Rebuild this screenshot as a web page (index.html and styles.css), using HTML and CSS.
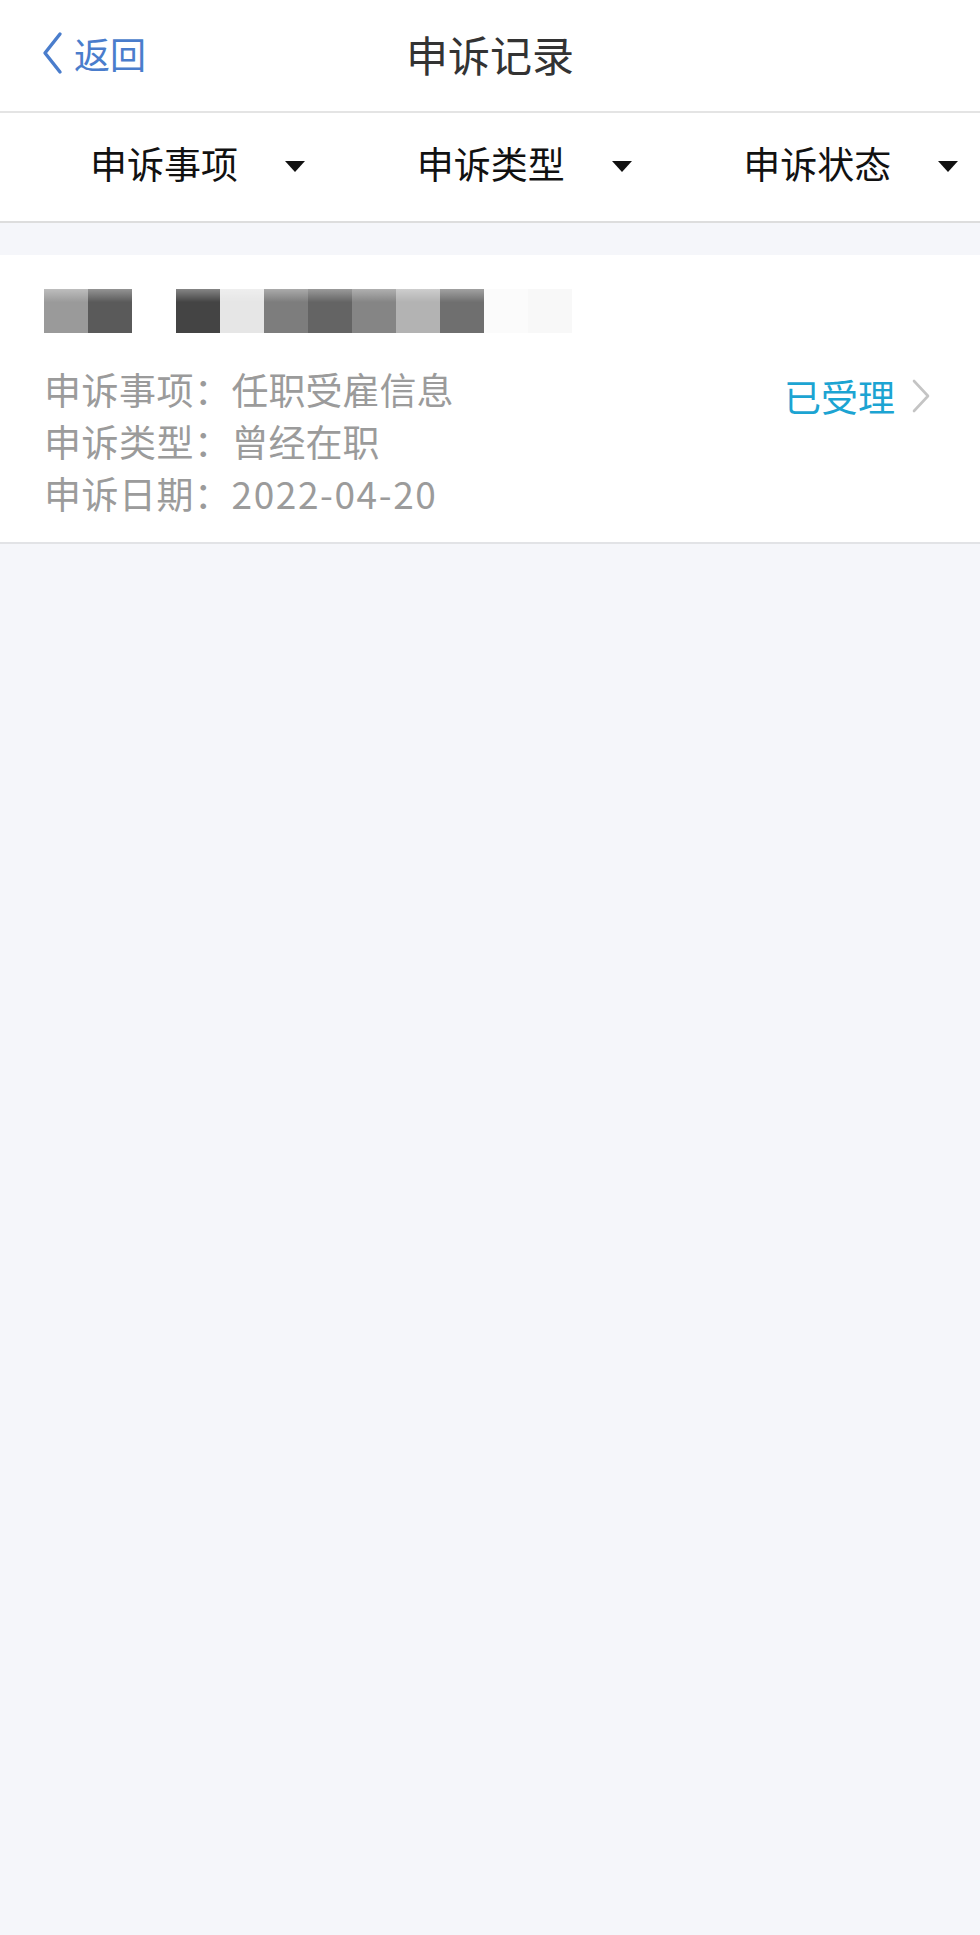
FILE: index.html
```html
<!DOCTYPE html>
<html lang="zh-CN">
<head>
<meta charset="utf-8">
<title>申诉记录</title>
<link rel="stylesheet" href="styles.css">
</head>
<body>
<header class="nav">
  <a class="back">
    <svg class="back-icon" width="24" height="44" viewBox="0 0 24 44"><path d="M19 3 L4 22 L19 41" fill="none" stroke="#4a7dcc" stroke-width="3.4" stroke-linecap="round" stroke-linejoin="round"/></svg>
    <span>返回</span>
  </a>
  <h1 class="title">申诉记录</h1>
</header>
<nav class="filters">
  <div class="filter"><span>申诉事项</span><i class="caret"></i></div>
  <div class="filter"><span>申诉类型</span><i class="caret"></i></div>
  <div class="filter"><span>申诉状态</span><i class="caret"></i></div>
</nav>
<main class="list">
  <section class="card">
    <div class="name">
      <i class="px p1"></i><i class="px p2"></i><i class="px p0"></i><i class="px p4"></i><i class="px p5"></i><i class="px p6"></i><i class="px p7"></i><i class="px p8"></i><i class="px p9"></i><i class="px p10"></i><i class="px p11"></i><i class="px p12"></i>
    </div>
    <div class="body">
      <div class="details">
        <p><span class="label">申诉事项：</span>任职受雇信息</p>
        <p><span class="label">申诉类型：</span>曾经在职</p>
        <p><span class="label">申诉日期：</span><span class="num">2022-04-20</span></p>
      </div>
      <div class="status">
        <span>已受理</span>
        <svg width="20" height="34" viewBox="0 0 20 34"><path d="M3 2 L17 17 L3 32" fill="none" stroke="#c4c4c4" stroke-width="2.6" stroke-linecap="round" stroke-linejoin="round"/></svg>
      </div>
    </div>
  </section>
</main>
</body>
</html>
```
FILE: styles.css
```css
* { box-sizing: border-box; }
html, body {
  margin: 0;
  padding: 0;
}
body {
  width: 980px;
  min-height: 1935px;
  background: #f5f6fa;
  font-family: "Noto Sans CJK SC", "Noto Sans", sans-serif;
}
.nav {
  position: relative;
  height: 113px;
  background: #fff;
  border-bottom: 2px solid #e4e4e4;
  display: flex;
  align-items: center;
  justify-content: center;
}
.back {
  position: absolute;
  left: 41px;
  top: 30px;
  display: flex;
  align-items: center;
  gap: 9px;
  color: #4a7dcc;
  font-size: 36px;
  line-height: 46px;
}
.back-icon { display: block; }
.title {
  margin: 0 0 4px 0;
  font-size: 42px;
  font-weight: 400;
  color: #333;
  line-height: 50px;
}
.filters {
  height: 110px;
  background: #fff;
  border-bottom: 2px solid #dddddd;
  display: grid;
  grid-template-columns: repeat(3, 1fr);
}
.filter {
  display: flex;
  align-items: center;
  padding-left: 90px;
  gap: 47px;
  font-size: 37px;
  color: #111;
  padding-bottom: 8px;
}
.caret {
  display: block;
  width: 0;
  height: 0;
  border-left: 10px solid transparent;
  border-right: 10px solid transparent;
  border-top: 11px solid #111;
  margin-top: 6px;
}
.list {
  padding-top: 32px;
}
.card {
  height: 289px;
  background: #fff;
  border-bottom: 2px solid #e2e3e6;
  padding: 34px 49px 0 44px;
}
.name {
  display: flex;
  height: 44px;
}
.px {
  display: block;
  width: 44px;
  height: 44px;
  background-image: linear-gradient(to bottom, rgba(255,255,255,0.35), rgba(255,255,255,0) 30%);
}
.p0 { background-color: #fff; background-image: none; }
.p1 { background-color: #9a9a9a; }
.p2 { background-color: #5a5a5a; }
.p4 { background-color: #444; }
.p5 { background-color: #e6e6e6; }
.p6 { background-color: #7d7d7d; }
.p7 { background-color: #646464; }
.p8 { background-color: #858585; }
.p9 { background-color: #b3b3b3; }
.p10 { background-color: #6f6f6f; }
.p11 { background-color: #fbfbfb; background-image: none; }
.p12 { background-color: #f8f8f8; background-image: none; }
.body {
  margin-top: 30px;
  display: flex;
  justify-content: space-between;
  align-items: flex-start;
}
.details p {
  margin: 0;
  font-size: 37px;
  line-height: 52px;
  color: #9b9b9b;
}
.label { letter-spacing: 0.5px; }
.num { letter-spacing: 1.6px; }
.status {
  margin-top: 8px;
  display: flex;
  align-items: center;
  gap: 16px;
  font-size: 37px;
  line-height: 50px;
  color: #1ca4d2;
}
.status svg { display: block; }
```
